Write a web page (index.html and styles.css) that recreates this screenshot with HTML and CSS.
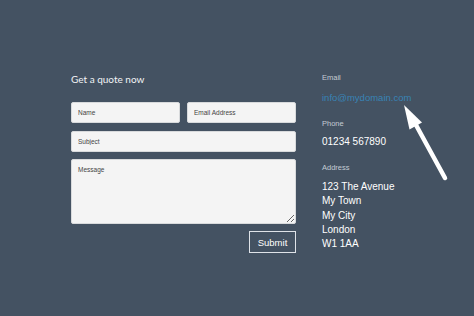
FILE: index.html
```html
<!DOCTYPE html>
<html lang="en">
<head>
  <meta charset="UTF-8" />
  <meta name="viewport" content="width=device-width, initial-scale=1" />
  <title>Get a quote</title>
  <link rel="stylesheet" href="styles.css">
</head>
<body>
  <div class="page">
    <form class="quote" onsubmit="return false;">
      <h2 class="quote-title">Get a quote now</h2>
      <div class="row">
        <input type="text" placeholder="Name" aria-label="Name" />
        <input type="email" placeholder="Email Address" aria-label="Email address" />
      </div>
      <input type="text" placeholder="Subject" aria-label="Subject" />
      <textarea placeholder="Message" aria-label="Message"></textarea>
      <div class="actions">
        <button type="submit">Submit</button>
      </div>
    </form>

    <div class="contact">
      <div class="label">Email</div>
      <a class="email" href="#">info@mydomain.com</a>
      <div class="label">Phone</div>
      <div class="value">01234 567890</div>
      <div class="label">Address</div>
      <div class="value address">
        123 The Avenue<br>
        My Town<br>
        My City<br>
        London<br>
        W1 1AA
      </div>
    </div>

    <svg class="arrow" width="60" height="90" viewBox="0 0 60 90" aria-hidden="true">
      <line x1="54" y1="86" x2="25" y2="33" stroke="#fff" stroke-width="4.5" stroke-linecap="round" />
      <polygon points="13,13 31,30.5 18.5,37.5" fill="#fff" />
    </svg>
  </div>
</body>
</html>
```

FILE: styles.css
```css
body {
  margin: 0;
  background: #445262;
  font-family: 'Liberation Sans', Arial, sans-serif;
  color: #fff;
}

.page {
  position: relative;
  width: 474px;
  height: 316px;
  box-sizing: border-box;
  padding: 71px 0 0 71px;
  display: flex;
  gap: 26px;
}

.quote {
  width: 225px;
  display: flex;
  flex-direction: column;
  gap: 7px;
}

.quote-title {
  margin: 0 0 8px;
  font-family: Lato, 'Open Sans', sans-serif;
  font-weight: normal;
  font-size: 10px;
  line-height: 16px;
  color: #f2f4f6;
}

.row {
  display: flex;
  gap: 7px;
  margin-bottom: 1px;
}

.row input {
  flex: 1;
  min-width: 0;
}

input, textarea {
  box-sizing: border-box;
  height: 21px;
  margin: 0;
  padding: 0 6px;
  border: 1px solid #d8dadc;
  border-radius: 2px;
  background: #f4f4f4;
  font-family: 'Liberation Sans', Arial, sans-serif;
  font-size: 6.5px;
  color: #333;
  outline: none;
}

input::placeholder, textarea::placeholder {
  color: #444;
}

textarea {
  height: 65px;
  padding-top: 6px;
  resize: vertical;
}

.actions {
  display: flex;
  justify-content: flex-end;
}

button {
  width: 47px;
  height: 22px;
  padding: 0;
  border: 1px solid #dfe3e8;
  background: transparent;
  color: #fff;
  font-family: 'Liberation Sans', Arial, sans-serif;
  font-size: 9.5px;
  cursor: pointer;
}

.contact {
  display: flex;
  flex-direction: column;
  padding-top: 2px;
}

.label {
  font-size: 7.5px;
  line-height: 10px;
  color: #c3cbd3;
  margin-bottom: 9px;
}

.email {
  font-size: 9.5px;
  line-height: 12px;
  color: #3883b5;
  text-decoration: none;
  margin-bottom: 15px;
}

.value {
  font-size: 10px;
  line-height: 14px;
  color: #fff;
  margin-top: -3px;
  margin-bottom: 14px;
}

.address {
  line-height: 14.3px;
  margin-top: -2px;
}

.arrow {
  position: absolute;
  left: 391px;
  top: 92px;
}
```
